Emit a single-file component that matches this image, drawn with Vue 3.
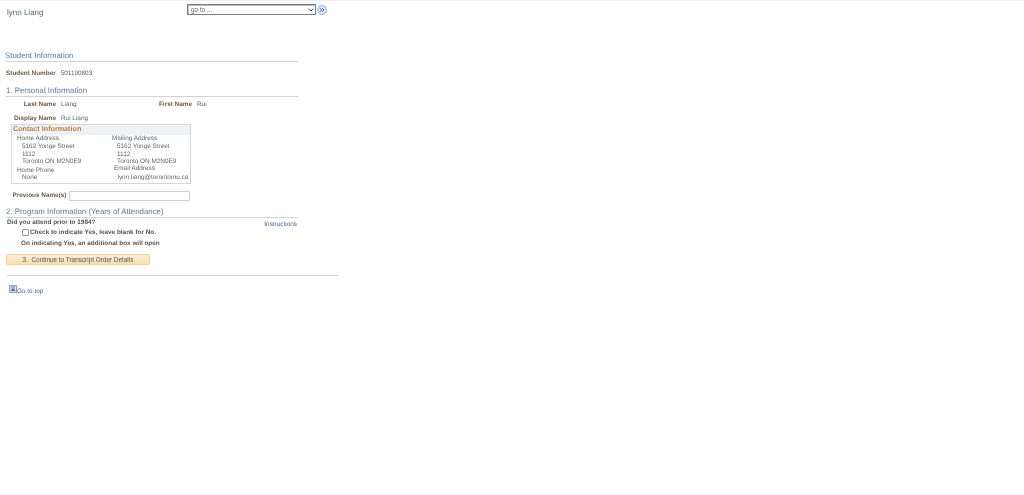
<script setup>
const homeLines = ['5162 Yonge Street', '1112', 'Toronto ON M2N0E9']
</script>

<template>
  <div class="page">
    <div class="topline"></div>
    <header class="top">
      <div class="name">lynn Liang</div>
      <div class="goto">
        <div class="select-wrap">
          <select class="select"><option>go to ...</option></select>
          <svg class="caret" width="6" height="4" viewBox="0 0 6 4">
            <path d="M0.6 0.6 3 3 5.4 0.6" fill="none" stroke="#444" stroke-width="1" />
          </svg>
        </div>
        <svg class="goicon" width="10" height="10" viewBox="0 0 10 10">
          <circle cx="5" cy="5" r="4.4" fill="#dfe8f5" stroke="#8aa5cd" stroke-width="0.9" />
          <path d="M2.9 3.2 4.7 5 2.9 6.8M5.2 3.2 7 5 5.2 6.8" fill="none" stroke="#2f5596" stroke-width="0.9" />
        </svg>
      </div>
    </header>

    <section class="student">
      <h2 class="head">Student Information</h2>
      <div class="num-row">
        <span class="lbl">Student Number</span>
        <span class="val">501190803</span>
      </div>
    </section>

    <section class="personal">
      <h2 class="head head-wide">1. Personal Information</h2>
      <div class="names">
        <span class="lbl w-last">Last Name</span>
        <span class="val v-last">Liang</span>
        <span class="lbl w-first">First Name</span>
        <span class="val">Rui</span>
      </div>
      <div class="display">
        <span class="lbl w-last">Display Name</span>
        <span class="val">Rui Liang</span>
      </div>

      <div class="contact">
        <div class="contact-title">Contact Information</div>
        <div class="contact-body">
          <div class="col">
            <div class="sub">Home Address</div>
            <div v-for="l in homeLines" :key="l" class="line">{{ l }}</div>
            <div class="sub sub-phone">Home Phone</div>
            <div class="line">None</div>
          </div>
          <div class="col col-r">
            <div class="sub">Mailing Address</div>
            <div v-for="l in homeLines" :key="l" class="line">{{ l }}</div>
            <div class="sub sub-email">Email Address</div>
            <div class="line line-mail">lynn.liang@torontomu.ca</div>
          </div>
        </div>
      </div>

      <div class="prev">
        <label class="lbl prev-lbl">Previous Name(s)</label>
        <input class="prev-input" type="text" />
      </div>
    </section>

    <section class="program">
      <h2 class="head head-wide">2. Program Information (Years of Attendance)</h2>
      <div class="q-row">
        <span class="lbl dark">Did you attend prior to 1984?</span>
        <a class="instr">Instructions</a>
      </div>
      <div class="check-row">
        <input class="check" type="checkbox" />
        <span class="lbl dark">Check to indicate Yes, leave blank for No.</span>
      </div>
      <div class="note lbl dark">On indicating Yes, an additional box will open</div>
      <button class="cta" type="button">3.&nbsp; Continue to Transcript Order Details</button>
    </section>

    <div class="rule"></div>
    <div class="totop">
      <svg class="topicon" width="8" height="8" viewBox="0 0 8 8">
        <rect x="0.5" y="0.5" width="7" height="7" fill="#cfdaec" stroke="#8aa5cd" />
        <path d="M2 2h4M2.2 5.6 4 3.4l1.8 2.2z" fill="#3d5585" stroke="#3d5585" stroke-width="0.6" />
      </svg>
      <a class="toplink">Go to top</a>
    </div>
  </div>
</template>

<style scoped>
.page {
  width: 1024px;
  height: 495px;
  overflow: hidden;
  background: #fff;
  font-family: "Liberation Sans", Arial, sans-serif;
  color: #444;
  box-sizing: border-box;
  text-rendering: geometricPrecision;
  filter: blur(0.3px);
}
.topline {
  height: 1px;
  background: #f0f0f0;
}
.top {
  display: flex;
  height: 48px;
  padding-left: 7px;
}
.name {
  width: 180px;
  padding-top: 6px;
  font-size: 8px;
  line-height: 11px;
  color: #566676;
}
.goto {
  display: flex;
  align-items: flex-start;
  padding-top: 3px;
}
.select-wrap {
  position: relative;
  width: 129px;
  height: 11px;
}
.select {
  display: block;
  width: 129px;
  height: 11px;
  padding: 0 0 0 3px;
  font-family: inherit;
  font-size: 6.4px;
  line-height: 9px;
  color: #666;
  background: #fff;
  border: 1px solid #808080;
  box-shadow: inset 1px 1px 0 #bbb;
  border-radius: 0;
  box-sizing: border-box;
  appearance: none;
}
.caret {
  position: absolute;
  right: 2px;
  top: 4px;
}
.goicon {
  margin-left: 1px;
  margin-top: 1px;
}
.head {
  margin: 0;
  font-weight: normal;
  font-size: 7.85px;
  line-height: 11px;
  color: #5a7a9e;
  border-bottom: 1px solid #d4d4d4;
}
.student {
  padding-left: 5px;
  width: 293px;
  padding-top: 1px;
}
.num-row {
  display: flex;
  align-items: baseline;
  padding: 7px 0 0 1px;
  height: 17px;
  box-sizing: border-box;
  line-height: 9px;
}
.lbl {
  font-size: 6.4px;
  font-weight: bold;
  color: #6a5a4a;
  line-height: 9px;
}
.dark {
  color: #555;
}
.val {
  font-size: 6.4px;
  color: #666;
  line-height: 9px;
  margin-left: 5px;
}
.personal {
  padding-left: 6px;
  padding-top: 6px;
}
.head-wide {
  width: 292px;
}
.names {
  display: flex;
  align-items: baseline;
  padding-top: 3px;
  height: 14px;
  box-sizing: border-box;
}
.w-last {
  width: 50px;
  text-align: right;
  flex: none;
}
.v-last {
  width: 70px;
}
.w-first {
  width: 62px;
  text-align: right;
  margin-left: -1px;
}
.display {
  display: flex;
  align-items: baseline;
  padding-top: 3px;
  height: 10px;
}
.contact {
  width: 180px;
  height: 60px;
  margin: 0 0 0 5px;
  border: 1px solid #d4d8dc;
  box-sizing: border-box;
}
.contact-title {
  height: 10px;
  padding-left: 1px;
  font-size: 7.2px;
  font-weight: bold;
  line-height: 8px;
  color: #bc8048;
  background: #eef2f4;
}
.contact-body {
  display: flex;
  padding-left: 5px;
}
.col {
  width: 95px;
  flex: none;
}
.col-r {
  width: 78px;
}
.sub {
  font-size: 6.4px;
  line-height: 8px;
  color: #666;
}
.line {
  padding-left: 5px;
  font-size: 6.4px;
  line-height: 7.6px;
  color: #666;
}
.sub-phone {
  margin-top: 1px;
  height: 7px;
}
.sub-email {
  padding-left: 2px;
  margin-top: -1px;
  margin-bottom: 1px;
}
.line-mail {
  padding-left: 5.5px;
  white-space: nowrap;
}
.prev {
  display: flex;
  align-items: center;
  margin-top: 6px;
  height: 11px;
}
.prev-lbl {
  width: 60.5px;
  text-align: right;
  flex: none;
}
.prev-input {
  width: 121px;
  height: 10px;
  margin-left: 2.5px;
  padding: 0;
  border: 1px solid #d0d0d0;
  box-sizing: border-box;
  background: #fff;
}
.program {
  padding-left: 6px;
  padding-top: 5px;
}
.q-row {
  display: flex;
  justify-content: space-between;
  width: 291px;
  padding-left: 1px;
  box-sizing: border-box;
  height: 9px;
}
.instr {
  font-size: 6.4px;
  line-height: 9px;
  color: #3f629f;
  padding-top: 2px;
}
.check-row {
  display: flex;
  align-items: center;
  height: 10px;
  padding-left: 16px;
}
.check-row .lbl {
  padding-top: 1px;
}
.check {
  appearance: none;
  width: 7px;
  height: 7px;
  margin: 0 1px 0 0;
  border: 1px solid #999;
  border-radius: 1px;
  background: #fff;
  box-sizing: border-box;
}
.note {
  padding: 2px 0 0 15px;
}
.cta {
  display: block;
  width: 144px;
  height: 11px;
  margin-top: 6px;
  padding: 0;
  font-family: inherit;
  font-size: 6.4px;
  line-height: 9px;
  color: #555;
  text-align: center;
  background: linear-gradient(#fdf0d8, #fbdcae);
  border: 1px solid #f0d0a0;
  border-radius: 1px;
  box-sizing: border-box;
}
.rule {
  width: 331px;
  height: 1px;
  margin: 10px 0 0 7px;
  background: #d4d4d4;
}
.totop {
  display: flex;
  align-items: flex-end;
  padding: 9px 0 0 9px;
}
.topicon {
  flex: none;
}
.toplink {
  font-size: 6.4px;
  line-height: 8px;
  color: #3f629f;
  margin-bottom: -3px;
}
</style>
